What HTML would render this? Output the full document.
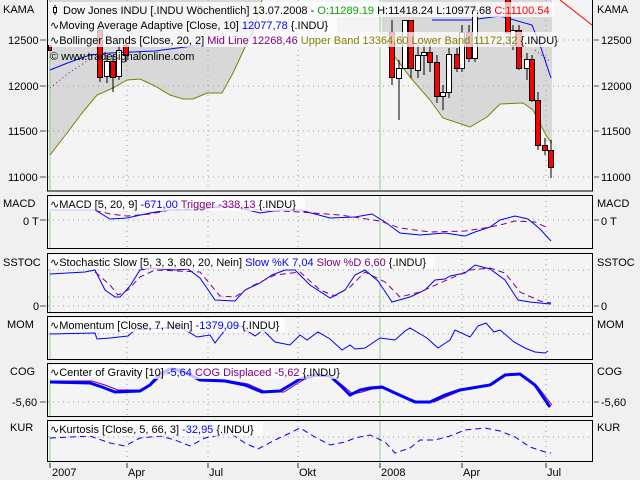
<!DOCTYPE html>
<html><head><meta charset="utf-8"><style>
html,body{margin:0;padding:0;background:#f0f0f0;width:640px;height:480px;overflow:hidden}
svg text{font-family:"Liberation Sans",sans-serif;font-size:11px}
</style></head><body>
<svg width="640" height="480" xmlns="http://www.w3.org/2000/svg">
<defs>
<clipPath id="cl"><rect x="0" y="250" width="43" height="30"/></clipPath>
<clipPath id="cr"><rect x="594" y="250" width="44" height="30"/></clipPath>
</defs>
<rect width="640" height="480" fill="#f0f0f0"/>
<!-- MAIN PANEL -->
<rect x="47.5" y="-1" width="545" height="192" fill="#f4f4f4" stroke="#000"/>
<path d="M49,0 L49,155 L50,155 L67,133 L82,113 L97,95 L113,88 L127,80 L140,79 L155,86 L170,95 L183,99 L193,99 L207,93 L222,93 L233,73 L247,43 L253,32 L262,0 Z" fill="#d8d8d8"/>
<path d="M382,0 L382,40 L395,57 L410,77 L430,100 L443,118 L470,127 L487,117 L500,104 L523,103 L533,110 L547,137 L552,143 L552,0 Z" fill="#d8d8d8"/>
<g stroke="#9a9" stroke-dasharray="1,4">
<line x1="48" y1="40" x2="592" y2="40"/><line x1="48" y1="86" x2="592" y2="86"/><line x1="48" y1="131" x2="592" y2="131"/><line x1="48" y1="177" x2="592" y2="177"/>
<line x1="127" y1="0" x2="127" y2="190"/><line x1="208" y1="0" x2="208" y2="190"/><line x1="298" y1="0" x2="298" y2="190"/><line x1="462" y1="0" x2="462" y2="190"/><line x1="546" y1="0" x2="546" y2="190"/>
</g>
<line x1="380" y1="0" x2="380" y2="190" stroke="#9c9"/><line x1="50" y1="0" x2="50" y2="190" stroke="#9c9"/>
<path d="M50,155 L67,133 L82,113 L97,95 L113,88 L127,80 L140,79 L155,86 L170,95 L183,99 L193,99 L207,93 L222,93 L233,73 L247,43 L253,32 L262,0" fill="none" stroke="#808000"/>
<path d="M385,40 L395,57 L410,77 L430,100 L443,118 L470,127 L487,117 L500,104 L523,103 L533,110 L547,137 L552,143" fill="none" stroke="#808000"/>
<path d="M50,70 L70,62 L90,55 L110,53 L155,51 L200,45" fill="none" stroke="#00f"/>
<path d="M432,20 L470,20 L500,16 L532,25 L540,45 L545,60 L551,78" fill="none" stroke="#00f"/>
<path d="M560,0 L592,25" stroke="#f00" fill="none"/>
<path d="M50,88 L70,72 L92,58" stroke="#800080" stroke-dasharray="1,3" fill="none"/>
<path d="M535,50 L551,62" stroke="#800080" stroke-dasharray="1,3" fill="none"/>
<!-- candles -->
<g stroke="#000">
<line x1="100" y1="25" x2="100" y2="82"/><rect x="97.5" y="30.5" width="5" height="47" fill="#f00"/>
<line x1="107" y1="55" x2="107" y2="83"/><rect x="104.5" y="61.5" width="5" height="15" fill="#fff"/>
<line x1="113" y1="55" x2="113" y2="92"/><rect x="110.5" y="61.5" width="5" height="16" fill="#f00"/>
<line x1="119" y1="45" x2="119" y2="80"/><rect x="116.5" y="50.5" width="5" height="26" fill="#fff"/>
<line x1="126" y1="40" x2="126" y2="62"/><rect x="123.5" y="45.5" width="5" height="10" fill="#f00"/>
<rect x="48.5" y="45.5" width="3" height="5" fill="#f00"/>
<line x1="392" y1="20" x2="392" y2="85"/><rect x="389.5" y="32.5" width="5" height="45" fill="#f00"/>
<line x1="399" y1="60" x2="399" y2="120"/><rect x="396.5" y="68.5" width="5" height="10" fill="#fff"/>
<rect x="402.5" y="20.5" width="5" height="48" fill="#fff"/>
<rect x="408.5" y="20.5" width="5" height="48" fill="#f00"/><line x1="411" y1="68" x2="411" y2="78"/>
<line x1="418" y1="45" x2="418" y2="78"/><rect x="415.5" y="55.5" width="5" height="15" fill="#fff"/>
<line x1="424" y1="45" x2="424" y2="75"/><rect x="421.5" y="52.5" width="5" height="3" fill="#fff"/>
<line x1="430" y1="45" x2="430" y2="72"/><rect x="427.5" y="52.5" width="5" height="10" fill="#f00"/>
<line x1="437" y1="55" x2="437" y2="103"/><rect x="434.5" y="62.5" width="5" height="34" fill="#f00"/>
<line x1="443" y1="85" x2="443" y2="110"/><rect x="440.5" y="92.5" width="5" height="4" fill="#fff"/>
<line x1="449" y1="48" x2="449" y2="98"/><rect x="446.5" y="54.5" width="5" height="38" fill="#fff"/>
<line x1="457" y1="48" x2="457" y2="72"/><rect x="454.5" y="54.5" width="5" height="14" fill="#f00"/>
<line x1="462" y1="25" x2="462" y2="72"/><rect x="459.5" y="32.5" width="5" height="36" fill="#fff"/>
<line x1="469" y1="25" x2="469" y2="62"/><rect x="466.5" y="32.5" width="5" height="26" fill="#f00"/>
<line x1="475" y1="5" x2="475" y2="62"/><rect x="472.5" y="10.5" width="5" height="48" fill="#fff"/>
<rect x="505.5" y="-1" width="5" height="34" fill="#f00"/>
<line x1="513" y1="25" x2="513" y2="50"/><rect x="510.5" y="30.5" width="5" height="15" fill="#fff"/>
<line x1="519" y1="25" x2="519" y2="70"/><rect x="516.5" y="30.5" width="5" height="38" fill="#f00"/>
<line x1="527" y1="53" x2="527" y2="80"/><rect x="524.5" y="59.5" width="5" height="9" fill="#fff"/>
<line x1="532" y1="55" x2="532" y2="102"/><rect x="529.5" y="59.5" width="5" height="41" fill="#f00"/>
<line x1="538" y1="92" x2="538" y2="150"/><rect x="535.5" y="100.5" width="5" height="45" fill="#f00"/>
<line x1="545" y1="138" x2="545" y2="155"/><rect x="542.5" y="145.5" width="5" height="5" fill="#f00"/>
<line x1="551" y1="140" x2="551" y2="178"/><rect x="548.5" y="150.5" width="5" height="17" fill="#f00"/>
</g>
<!-- legends -->
<rect x="49" y="2" width="505" height="15" fill="#fff" fill-opacity="0.75"/>
<rect x="49" y="17" width="288" height="15" fill="#fff" fill-opacity="0.75"/>
<rect x="49" y="32" width="505" height="15" fill="#fff" fill-opacity="0.75"/>
<g fill="none" stroke="#000"><line x1="55" y1="5" x2="55" y2="15"/><rect x="53.5" y="7.5" width="3" height="5" fill="#fff"/></g>
<text x="63" y="14">Dow Jones INDU [.INDU  Wöchentlich] 13.07.2008 - <tspan fill="#0a0">O:11289.19</tspan> H:11418.24 L:10977.68 <tspan fill="#f00">C:11100.54</tspan></text>
<text x="50" y="29">∿Moving Average Adaptive [Close, 10] <tspan fill="#00f">12077,78</tspan> {.INDU}</text>
<text x="50" y="44">∿Bollinger Bands [Close, 20, 2] <tspan fill="#800080">Mid Line 12268,46</tspan> <tspan fill="#808000">Upper Band 13364,60 Lower Band 11172,32</tspan> {.INDU}</text>
<text x="50" y="60">© www.tradesignalonline.com</text>
<!-- axis labels -->
<g>
<text x="3" y="13">KAMA</text><text x="597" y="13">KAMA</text>
<text x="8" y="44">12500</text><text x="601" y="44">12500</text>
<text x="8" y="90">12000</text><text x="601" y="90">12000</text>
<text x="8" y="135">11500</text><text x="601" y="135">11500</text>
<text x="8" y="181">11000</text><text x="601" y="181">11000</text>
<text x="3" y="207">MACD</text><text x="597" y="207">MACD</text>
<text x="23" y="225">0 T</text><text x="601" y="225">0 T</text>
<text x="3" y="266" clip-path="url(#cl)">SSTOC</text><text x="597" y="266" clip-path="url(#cr)">SSTOC</text>
<text x="33" y="310">0</text><text x="601" y="310">0</text>
<text x="7" y="328">MOM</text><text x="597" y="328">MOM</text>
<text x="10" y="375">COG</text><text x="597" y="375">COG</text>
<text x="12" y="406">-5,60</text><text x="601" y="406">-5,60</text>
<text x="10" y="431">KUR</text><text x="597" y="431">KUR</text>
</g>
<g stroke="#555"><line x1="40" y1="40" x2="46" y2="40"/><line x1="40" y1="86" x2="46" y2="86"/><line x1="40" y1="131" x2="46" y2="131"/><line x1="40" y1="177" x2="46" y2="177"/><line x1="594" y1="40" x2="599" y2="40"/><line x1="594" y1="86" x2="599" y2="86"/><line x1="594" y1="131" x2="599" y2="131"/><line x1="594" y1="177" x2="599" y2="177"/>
<line x1="40" y1="220" x2="46" y2="220"/><line x1="594" y1="220" x2="599" y2="220"/><line x1="40" y1="306" x2="46" y2="306"/><line x1="594" y1="306" x2="599" y2="306"/><line x1="40" y1="402" x2="46" y2="402"/><line x1="594" y1="402" x2="599" y2="402"/></g>
<!-- SUB PANELS -->
<g fill="#f4f4f4" stroke="#000">
<rect x="47.5" y="195.5" width="545" height="53"/>
<rect x="47.5" y="253.5" width="545" height="59"/>
<rect x="47.5" y="316.5" width="545" height="43"/>
<rect x="47.5" y="363.5" width="545" height="53"/>
<rect x="47.5" y="420.5" width="545" height="41"/>
</g>
<g stroke="#9a9" stroke-dasharray="1,4">
<line x1="48" y1="220" x2="592" y2="220"/><line x1="48" y1="270" x2="592" y2="270"/><line x1="48" y1="297" x2="592" y2="297"/><line x1="48" y1="306" x2="592" y2="306"/><line x1="48" y1="334" x2="592" y2="334"/><line x1="48" y1="402" x2="592" y2="402"/><line x1="48" y1="437" x2="592" y2="437"/>
</g>
<g stroke="#9a9" stroke-dasharray="1,4">
<path d="M127,196V248M208,196V248M298,196V248M462,196V248M546,196V248M127,254V312M208,254V312M298,254V312M462,254V312M546,254V312M127,317V359M208,317V359M298,317V359M462,317V359M546,317V359M127,364V416M208,364V416M298,364V416M462,364V416M546,364V416M127,421V461M208,421V461M298,421V461M462,421V461M546,421V461"/>
</g>
<path d="M380,196V248M380,254V312M380,317V359M380,364V416M380,421V461M50,196V248M50,254V312M50,317V359M50,364V416M50,421V461" stroke="#9c9"/>
<!-- MACD -->
<path d="M50,210 L95,210 L110,219 L127,218 L150,213 L168,210 L195,210 L222,206 L240,208 L260,213 L280,210 L300,210 L330,218 L355,217 L372,214 L385,222 L400,233 L420,235 L445,233 L465,236 L475,232 L490,227 L500,220 L515,216 L528,219 L540,229 L551,241" fill="none" stroke="#00f"/>
<path d="M95,210 L110,214 L127,216 L150,214 L170,210 L230,207 L260,210 L300,212 L340,215 L380,221 L400,228 L430,232 L465,231 L485,228 L500,225 L515,221 L535,222 L548,228" fill="none" stroke="#800080" stroke-dasharray="6,4"/>
<rect x="49" y="197" width="256" height="14" fill="#fff" fill-opacity="0.75"/>
<text x="50" y="208">∿MACD [5, 20, 9] <tspan fill="#00f">-671,00</tspan> <tspan fill="#800080">Trigger -338,13</tspan> {.INDU}</text>
<!-- SSTOC -->
<path d="M50,274 L85,272 L95,270 L105,290 L115,297 L120,297 L130,286 L140,270 L150,268 L175,270 L188,269 L200,278 L215,300 L235,301 L245,290 L260,283 L272,275 L285,270 L295,270 L310,285 L330,298 L345,290 L355,275 L365,270 L378,281 L392,302 L410,297 L425,290 L435,280 L445,279 L450,276 L465,273 L475,265 L490,269 L505,280 L518,300 L530,302 L540,303 L551,304" fill="none" stroke="#00f"/>
<path d="M95,272 L110,285 L118,295 L128,290 L140,277 L155,270 L200,272 L220,296 L235,297 L250,287 L275,275 L300,272 L320,290 L335,296 L350,287 L365,272 L385,282 L400,297 L420,292 L440,283 L470,270 L490,268 L505,273 L520,292 L540,301 L551,303" fill="none" stroke="#800080" stroke-dasharray="6,4"/>
<rect x="49" y="255" width="386" height="14" fill="#fff" fill-opacity="0.75"/>
<text x="50" y="266">∿Stochastic Slow [5, 3, 3, 80, 20, Nein] <tspan fill="#00f">Slow %K 7,04</tspan> <tspan fill="#800080">Slow %D 6,60</tspan> {.INDU}</text>
<!-- MOM -->
<path d="M50,334 L95,333 L97,339 L110,338 L128,336 L135,330 L180,327 L197,337 L210,335 L215,343 L228,326 L240,326 L255,336 L263,330 L275,342 L290,345 L300,335 L307,340 L318,332 L330,339 L342,350 L350,345 L355,349 L365,348 L380,338 L395,340 L405,331 L410,328 L427,338 L438,348 L450,340 L455,330 L470,337 L478,326 L486,323 L494,332 L500,330 L506,335 L514,342 L525,348 L535,352 L545,353 L548,351" fill="none" stroke="#00f"/>
<rect x="49" y="318" width="236" height="14" fill="#fff" fill-opacity="0.75"/>
<text x="50" y="329">∿Momentum [Close, 7, Nein] <tspan fill="#00f">-1379,09</tspan> {.INDU}</text>
<!-- COG -->
<path d="M50,381 L92,381 L105,385 L118,390 L140,390 L150,386 L160,377 L172,371 L185,373 L200,379 L225,380 L248,384 L266,392 L284,392 L295,385 L305,379 L318,376 L332,377 L342,385 L353,394 L362,392 L372,389 L385,388 L398,394 L418,402 L434,402 L448,396 L462,390 L492,385 L508,374 L522,375 L538,387 L552,405" fill="none" stroke="#800080"/>
<path d="M50,382 L90,383 L102,387 L115,392 L140,391 L150,385 L160,374 L170,369 L180,370 L200,380 L225,381 L245,385 L262,392 L280,391 L292,384 L300,379 L315,375 L330,376 L340,385 L350,395 L360,390 L370,388 L382,387 L395,393 L415,402 L430,402 L445,395 L460,390 L490,385 L505,375 L520,374 L535,385 L550,407" fill="none" stroke="#00f" stroke-width="3"/>
<rect x="49" y="365" width="292" height="14" fill="#fff" fill-opacity="0.75"/>
<text x="50" y="376">∿Center of Gravity [10] <tspan fill="#00f">-5,64</tspan> <tspan fill="#800080">COG Displaced -5,62</tspan> {.INDU}</text>
<!-- KUR -->
<path d="M50,438 L90,436 L110,443 L125,446 L140,438 L160,436 L175,440 L190,446 L205,438 L230,433 L245,443 L258,449 L275,440 L290,433 L300,428 L315,437 L330,445 L345,442 L355,438 L370,435 L385,442 L395,453 L410,448 L420,440 L435,440 L450,436 L465,430 L485,428 L500,431 L515,437 L530,447 L545,452 L551,453" fill="none" stroke="#00f" stroke-dasharray="6,4"/>
<rect x="49" y="422" width="214" height="14" fill="#fff" fill-opacity="0.75"/>
<text x="50" y="433">∿Kurtosis [Close, 5, 66, 3] <tspan fill="#00f">-32,95</tspan> {.INDU}</text>
<!-- x axis -->
<path d="M50,463V468M127,463V468M208,463V468M298,463V468M380,463V468M462,463V468M546,463V468" stroke="#333"/>
<text x="52" y="476">2007</text><text x="128" y="476">Apr</text><text x="209" y="476">Jul</text><text x="299" y="476">Okt</text><text x="381" y="476">2008</text><text x="463" y="476">Apr</text><text x="547" y="476">Jul</text>
</svg>
</body></html>
